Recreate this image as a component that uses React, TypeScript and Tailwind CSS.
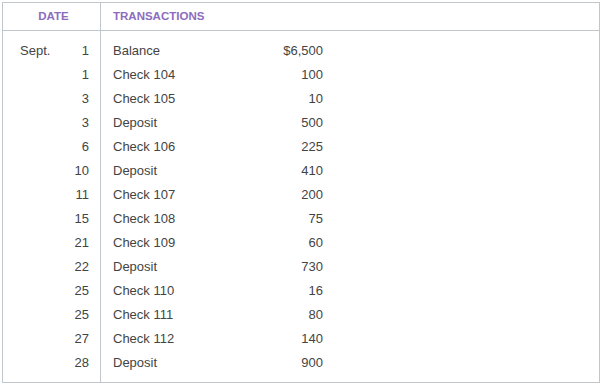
import React from 'react';

const ROWS: { month?: string; day: number; desc: string; amount: string }[] = [
  { month: 'Sept.', day: 1, desc: 'Balance', amount: '$6,500' },
  { day: 1, desc: 'Check 104', amount: '100' },
  { day: 3, desc: 'Check 105', amount: '10' },
  { day: 3, desc: 'Deposit', amount: '500' },
  { day: 6, desc: 'Check 106', amount: '225' },
  { day: 10, desc: 'Deposit', amount: '410' },
  { day: 11, desc: 'Check 107', amount: '200' },
  { day: 15, desc: 'Check 108', amount: '75' },
  { day: 21, desc: 'Check 109', amount: '60' },
  { day: 22, desc: 'Deposit', amount: '730' },
  { day: 25, desc: 'Check 110', amount: '16' },
  { day: 25, desc: 'Check 111', amount: '80' },
  { day: 27, desc: 'Check 112', amount: '140' },
  { day: 28, desc: 'Deposit', amount: '900' },
];

export default function App() {
  return (
    <div className="w-[602px] h-[386px] bg-white pt-[2px] pl-[2px]" style={{ fontFamily: '"Liberation Sans", Arial, sans-serif' }}>
      <div className="w-[598px] h-[381px] border border-[#bfc6cc] flex flex-col">
        {/* header */}
        <div className="flex h-[28px] border-b border-[#bfc6cc] text-[11.5px] font-bold text-[#8c6cbd]">
          <div className="w-[98px] border-r border-[#bfc6cc] flex items-center justify-center pl-[4px]">DATE</div>
          <div className="flex-1 flex items-center pl-[12px]">TRANSACTIONS</div>
        </div>
        {/* body */}
        <div className="flex flex-1 text-[13px] text-[#444]">
          <div className="w-[98px] border-r border-[#bfc6cc] pt-[8px]">
            {ROWS.map((r, i) => (
              <div key={i} className="h-[24px] flex items-center">
                <span className="w-[50px] pl-[17px]">{r.month ?? ''}</span>
                <span className="w-[36px] text-right">{r.day}</span>
              </div>
            ))}
          </div>
          <div className="flex-1 pt-[8px]">
            {ROWS.map((r, i) => (
              <div key={i} className="h-[24px] flex items-center pl-[12px]">
                <span className="w-[150px]">{r.desc}</span>
                <span className="w-[60px] text-right">{r.amount}</span>
              </div>
            ))}
          </div>
        </div>
      </div>
    </div>
  );
}
